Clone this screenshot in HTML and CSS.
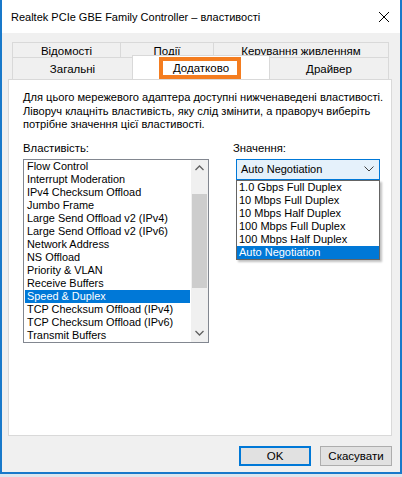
FILE: index.html
```html
<!DOCTYPE html>
<html lang="uk">
<head>
<meta charset="utf-8">
<link rel="stylesheet" href="styles.css">
</head>
<body>
<div class="window">
  <div class="titlebar">
    <span class="title">Realtek PCIe GBE Family Controller – властивості</span>
    <svg class="close" width="12" height="12" viewBox="0 0 12 12"><path d="M1 1 L11 11 M11 1 L1 11" stroke="#000" stroke-width="1" fill="none"/></svg>
  </div>
  <div class="content">
    <div class="tabs">
      <div class="tabrow row1">
        <div class="tab t1">Відомості</div>
        <div class="tab t2">Події</div>
        <div class="tab t3">Керування живленням</div>
      </div>
      <div class="tabrow row2">
        <div class="tab t4">Загальні</div>
        <div class="tab t5 selected">Додатково<span class="mark"></span></div>
        <div class="tab t6">Драйвер</div>
      </div>
    </div>
    <div class="panel">
      <p class="desc">Для цього мережевого адаптера доступні нижченаведені властивості.<br>Ліворуч клацніть властивість, яку слід змінити, а праворуч виберіть<br>потрібне значення цієї властивості.</p>
      <div class="cols">
        <div class="col-left">
          <div class="label">Властивість:</div>
          <div class="listbox">
            <ul class="items">
              <li>Flow Control</li>
              <li>Interrupt Moderation</li>
              <li>IPv4 Checksum Offload</li>
              <li>Jumbo Frame</li>
              <li>Large Send Offload v2 (IPv4)</li>
              <li>Large Send Offload v2 (IPv6)</li>
              <li>Network Address</li>
              <li>NS Offload</li>
              <li>Priority &amp; VLAN</li>
              <li>Receive Buffers</li>
              <li class="sel">Speed &amp; Duplex</li>
              <li>TCP Checksum Offload (IPv4)</li>
              <li>TCP Checksum Offload (IPv6)</li>
              <li>Transmit Buffers</li>
            </ul>
            <div class="scrollbar">
              <div class="sb-btn"><svg width="9" height="6" viewBox="0 0 9 6"><path d="M0.5 5 L4.5 1 L8.5 5" stroke="#606060" stroke-width="1.3" fill="none"/></svg></div>
              <div class="sb-track"><div class="sb-thumb"></div></div>
              <div class="sb-btn"><svg width="9" height="6" viewBox="0 0 9 6"><path d="M0.5 1 L4.5 5 L8.5 1" stroke="#606060" stroke-width="1.3" fill="none"/></svg></div>
            </div>
          </div>
        </div>
        <div class="col-right">
          <div class="label">Значення:</div>
          <div class="combo">
            <div class="combo-box">
              <span>Auto Negotiation</span>
              <svg width="10" height="6" viewBox="0 0 10 6"><path d="M0.5 0.5 L5 5 L9.5 0.5" stroke="#404040" stroke-width="1" fill="none"/></svg>
            </div>
            <ul class="dropdown">
              <li>1.0 Gbps Full Duplex</li>
              <li>10 Mbps Full Duplex</li>
              <li>10 Mbps Half Duplex</li>
              <li>100 Mbps Full Duplex</li>
              <li>100 Mbps Half Duplex</li>
              <li class="sel">Auto Negotiation</li>
            </ul>
          </div>
        </div>
      </div>
    </div>
    <div class="buttons">
      <button class="btn default">OK</button>
      <button class="btn">Скасувати</button>
    </div>
  </div>
</div>
</body>
</html>
```
FILE: styles.css
```css
* { box-sizing: border-box; }
html, body { margin: 0; padding: 0; }
body {
  background: #dde7ef;
  font-family: "Liberation Sans", Arial, sans-serif;
  font-size: 11.3px;
  color: #000;
  width: 402px;
  height: 477px;
  overflow: hidden;
}
.window {
  width: 402px;
  height: 474px;
  border-left: 2px solid #1979ca;
  border-right: 2px solid #1979ca;
  border-bottom: 2px solid #1979ca;
  background: #f0f0f0;
  display: flex;
  flex-direction: column;
}
.titlebar {
  height: 33px;
  background: #fff;
  display: flex;
  align-items: center;
  padding: 0 10px 0 9px;
  justify-content: space-between;
}
.title { font-size: 11px; padding-top: 1px; }
.content {
  flex: 1;
  display: flex;
  flex-direction: column;
  padding: 9px 8px 6px 6px;
}
.tabs { margin: 0 3px 0 4px; font-size: 11.5px; }
.tabrow { display: flex; }
.tab {
  border: 1px solid #d9d9d9;
  border-bottom: none;
  background: #f0f0f0;
  display: flex;
  align-items: center;
  justify-content: center;
  margin-right: -1px;
  white-space: nowrap;
}
.row1 .tab { height: 15px; padding-top: 2px; }
.row2 .tab { height: 22px; padding-top: 1px; }
.t1 { width: 109px; }
.t2 { width: 94px; }
.t3 { flex: 1; margin-right: 0; }
.t4 { width: 121px; }
.t5 { width: 138px; }
.t6 { flex: 1; margin-right: 0; }
.tab.selected {
  background: #fff;
  position: relative;
  z-index: 2;
  height: 24px;
  margin-top: -2px;
  margin-bottom: -1px;
}
.mark {
  position: absolute;
  left: 26px;
  top: 1px;
  width: 82px;
  height: 22px;
  border: 4px solid #f47d20;
}
.panel {
  flex: 1;
  background: #fff;
  border: 1px solid #d9d9d9;
  padding: 11px 0 0 14px;
  position: relative;
}
.desc {
  margin: 0;
  font-size: 11.1px;
  line-height: 13.5px;
  white-space: nowrap;
}
.cols { display: flex; margin-top: 9px; }
.col-left { width: 210px; }
.label { line-height: 14px; height: 14px; margin-bottom: 4px; }
.listbox {
  width: 186px;
  height: 184px;
  border: 1px solid #828790;
  display: flex;
  background: #fff;
  font-size: 10.9px;
}
.items {
  list-style: none;
  margin: 0;
  padding: 0;
  flex: 1;
}
.items li {
  height: 13px;
  line-height: 13px;
  padding-left: 3px;
  white-space: nowrap;
}
.items li.sel {
  background: #0078d7;
  color: #fff;
  margin: 0 1px;
  padding-left: 2px;
}
.scrollbar {
  width: 17px;
  background: #f0f0f0;
  display: flex;
  flex-direction: column;
}
.sb-btn {
  height: 17px;
  display: flex;
  align-items: center;
  justify-content: center;
}
.sb-track { flex: 1; padding: 0 1px; }
.sb-thumb { height: 94px; margin-top: 17px; background: #cdcdcd; }
.col-right { position: relative; }
.combo { position: relative; margin-left: 3px; width: 144px; font-size: 11px; }
.combo-box {
  height: 21px;
  border: 1px solid #0078d7;
  background: #e5f1fb;
  display: flex;
  align-items: center;
  justify-content: space-between;
  padding: 0 5px 0 4px;
}
.dropdown {
  position: absolute;
  top: 21px;
  left: 0;
  width: 144px;
  margin: 0;
  padding: 0;
  list-style: none;
  background: #fff;
  border: 1px solid #646464;
  box-shadow: 2px 2px 2px rgba(0,0,0,0.25);
}
.dropdown li {
  height: 13px;
  line-height: 13px;
  padding-left: 2px;
  white-space: nowrap;
}
.dropdown li.sel { background: #0078d7; color: #fff; }
.buttons {
  display: flex;
  justify-content: flex-end;
  gap: 9px;
  margin-top: 10px;
}
.btn {
  width: 72px;
  height: 20px;
  font-family: inherit;
  font-size: 11.5px;
  background: #e1e1e1;
  border: 1px solid #adadad;
  padding: 0;
  color: #000;
}
.btn.default { border: 2px solid #0078d7; }
```
